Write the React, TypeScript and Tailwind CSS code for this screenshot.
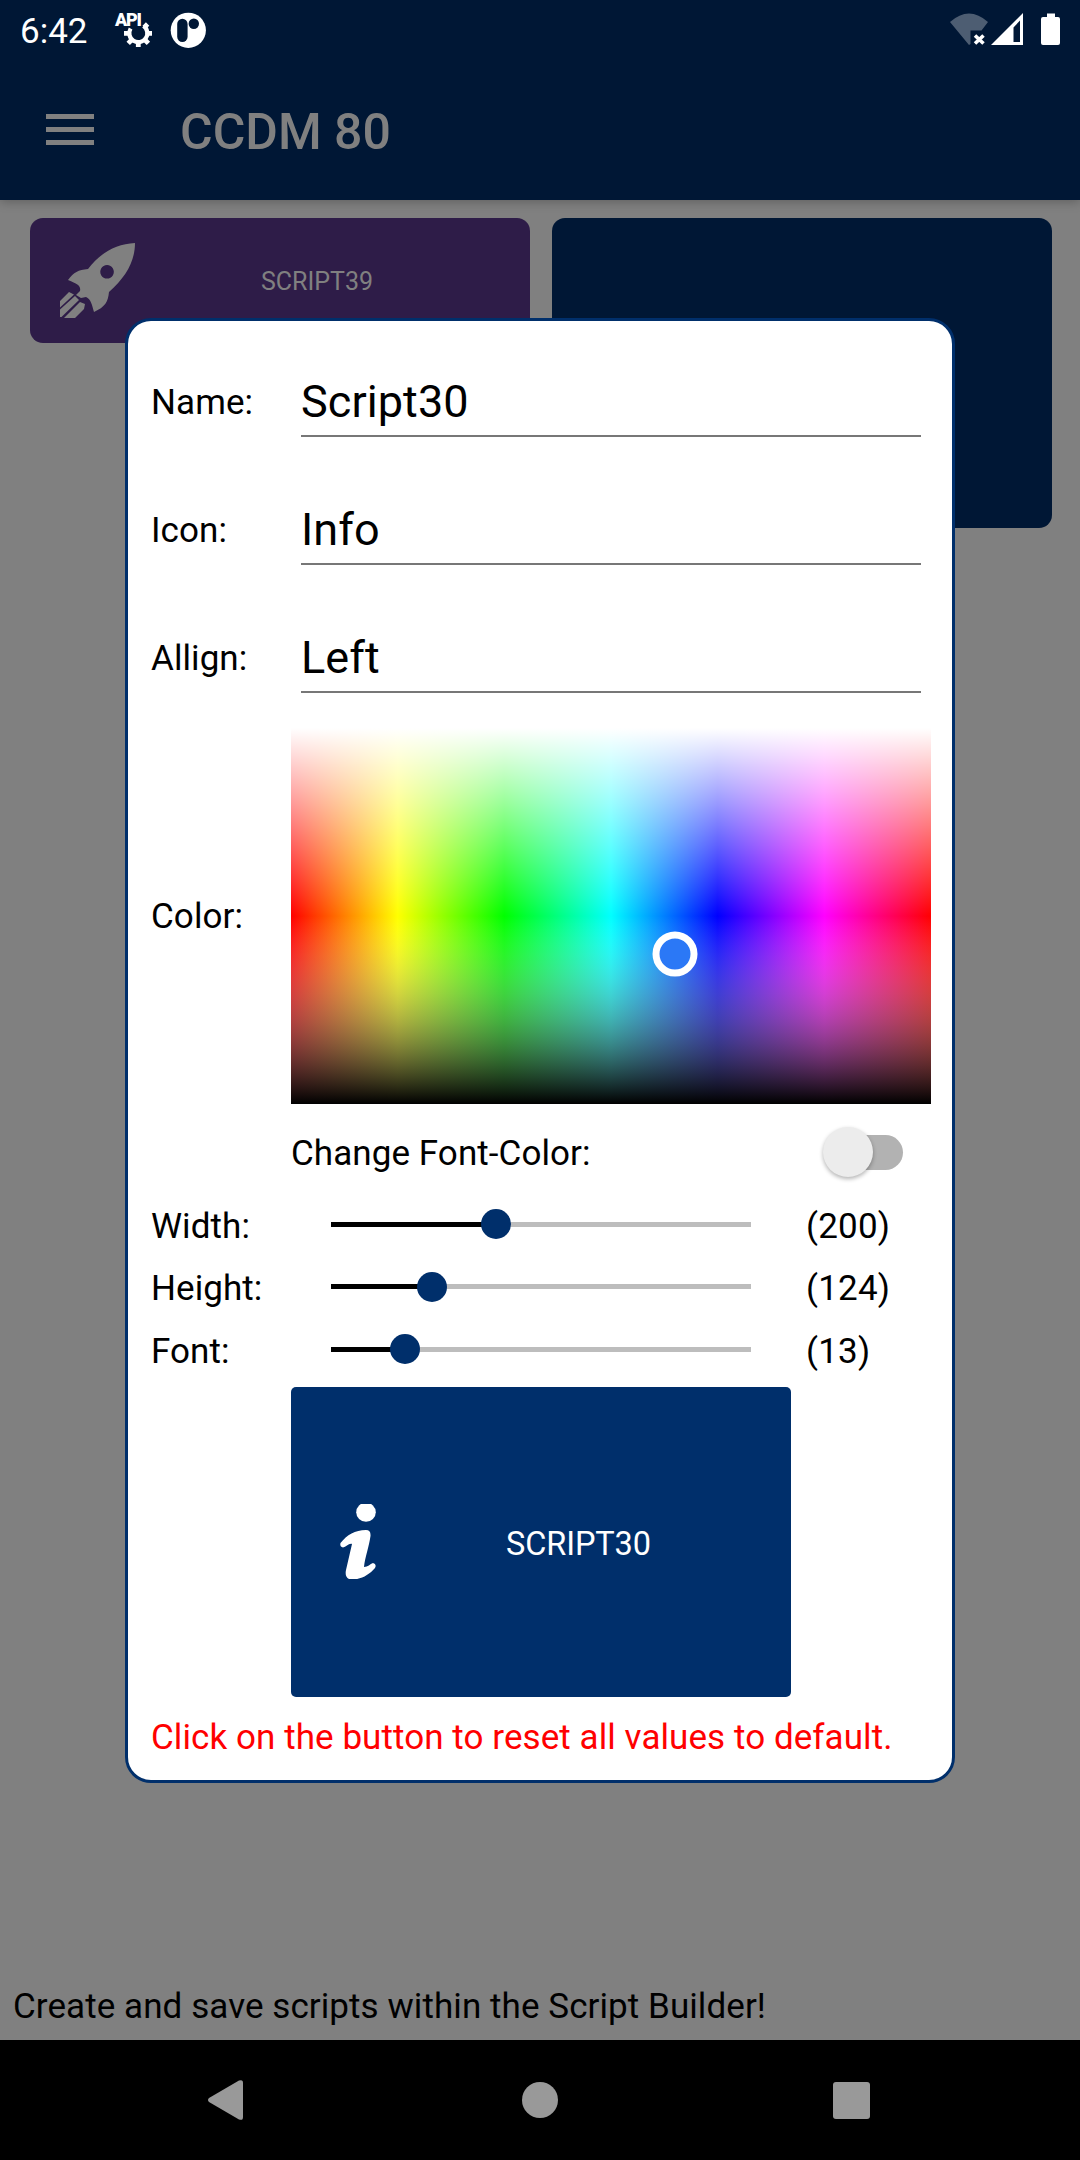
import React from "react";

const scripts = { name: "Script30", icon: "Info", align: "Left" };

const fields = [
  { label: "Name:", value: scripts.name },
  { label: "Icon:", value: scripts.icon },
  { label: "Allign:", value: scripts.align },
];

const sliders = [
  { label: "Width:", value: 200, offset: 165, row: "h-[62px]" },
  { label: "Height:", value: 124, offset: 101, row: "h-[63px]" },
  { label: "Font:", value: 13, offset: 74, row: "h-[62px]" },
];

function ApiGearIcon() {
  return (
    <div className="relative h-[36px] w-[40px]">
      <svg className="h-[36px] w-[40px]" viewBox="0 0 40 36">
        <g fill="none" stroke="#fff">
          <path d="M16.6 16.5 A9 9 0 1 0 29.5 13.8" strokeWidth="4.2" />
          <path d="M15 21.3 H10 M33 21.3 H38 M24.3 30 V35 M17.8 27.8 L14.2 31.4 M30.8 27.8 L34.4 31.4 M30.2 15.4 L33.6 12" strokeWidth="4.8" />
        </g>
      </svg>
      <span className="absolute left-[1px] top-[-3px] text-[18px] font-black leading-[21px] tracking-[-1.3px]">API</span>
    </div>
  );
}

function RoundLogoIcon() {
  return (
    <svg className="h-[36px] w-[36px]" viewBox="0 0 36 36">
      <circle cx="18.3" cy="18.3" r="17.6" fill="#fff" />
      <rect x="7.2" y="6.7" width="10.4" height="23.3" rx="5.2" fill="#001735" />
      <circle cx="23.8" cy="11.8" r="5.2" fill="#001735" />
    </svg>
  );
}

function StatusBar() {
  return (
    <div className="flex h-[60px] items-center pl-5 pr-5 text-white">
      <span className="w-[94px] pt-[2px] text-[35px] leading-[41px]">6:42</span>
      <ApiGearIcon />
      <div className="w-4" />
      <RoundLogoIcon />
      <div className="flex-1" />
      <svg className="-mt-[2px] h-[33px] w-[110px]" viewBox="0 0 110 33">
        <path d="M0 9 Q19 -8 38 9 L31.5 17.5 H20.5 V31 L19 32 Z" fill="#4d5d72" />
        <path d="M25 22.5 L33.5 30.5 M33.5 22.5 L25 30.5" stroke="#fff" strokeWidth="3.6" />
        <path fillRule="evenodd" d="M73 0 V32 H41 Z M70 7.5 L63.5 14.5 V29 H70 Z" fill="#fff" />
        <path d="M97 0.5 h8 v3.5 h3 q2 0 2 2 v24 q0 2 -2 2 h-15 q-2 0 -2 -2 v-24 q0 -2 2 -2 h4 z" fill="#fff" />
      </svg>
    </div>
  );
}

function AppBar() {
  return (
    <div className="flex h-[140px] items-center pl-[46px]">
      <div className="-mt-[1px] flex w-12 flex-col gap-2">
        <div className="h-[5px] bg-[#808080]" />
        <div className="h-[5px] bg-[#808080]" />
        <div className="h-[5px] bg-[#808080]" />
      </div>
      <span className="ml-[86px] mt-1 text-[50px] font-medium leading-[58px] text-[#808080]">CCDM 80</span>
    </div>
  );
}

function RocketIcon() {
  return (
    <svg className="h-[75px] w-[75px]" viewBox="0 0 75 75" fill="#808080">
      <path fillRule="evenodd" d="M75 0 C75 18 66 34 49 49 C48 59 45 64 34 69 C32 62 31 56 26 54 L21 55 L16 52 L20 48 C21 43 18 41 8 37 C14 29 18 27 28 26 C40 10 56 1 75 0 Z M47 22 a6.8 6.8 0 1 0 0.1 0 Z" />
      <path d="M0 58 L9 49 L14 51.5 L0 64.5 Z M0 66.5 L15 53 L19 57 L1.5 74 L0 74 Z M4 75 L20 59 L25 61 L24 66 L15 75 Z" />
    </svg>
  );
}

function InfoIcon() {
  return (
    <svg className="-mt-[2px] h-[75px] w-[36px]" viewBox="0 0 36 75" fill="#fff">
      <ellipse cx="26" cy="8.2" rx="9.8" ry="9.6" />
      <path d="M0.5 39 C7 31 15 26 26 26 Q31 26 30.5 32 C29 43 25 53 24 63 C28 63 30 60 33 59 Q37 60 35 64 C29 71 21 75.5 12 75.5 C6 75.5 5 71 6 66 L12 40 C9 39 6 43 3 43.5 Q-0.5 43 0.5 39 Z" />
    </svg>
  );
}

function ColorField() {
  return (
    <svg className="block h-[376px] w-[640px]" viewBox="0 0 640 376">
      <defs>
        <linearGradient id="hue">
          <stop offset="0" stopColor="#f00" />
          <stop offset="0.16667" stopColor="#ff0" />
          <stop offset="0.33333" stopColor="#0f0" />
          <stop offset="0.5" stopColor="#0ff" />
          <stop offset="0.66667" stopColor="#00f" />
          <stop offset="0.83333" stopColor="#f0f" />
          <stop offset="1" stopColor="#f00" />
        </linearGradient>
        <linearGradient id="shade" x1="0" y1="0" x2="0" y2="1">
          <stop offset="0" stopColor="#fff" />
          <stop offset="0.5" stopColor="#fff" stopOpacity="0" />
          <stop offset="1" stopColor="#000" />
        </linearGradient>
      </defs>
      <rect width="640" height="376" fill="url(#hue)" />
      <rect width="640" height="376" fill="url(#shade)" />
      <circle cx="384" cy="226" r="19" fill="#2b78f6" stroke="#fff" strokeWidth="7" />
    </svg>
  );
}

function Dialog() {
  return (
    <div className="absolute left-[125px] top-[318px] flex h-[1465px] w-[830px] flex-col rounded-[26px] border-[3px] border-[#002f6b] bg-white pl-[23px] text-[35px] leading-[41px] tracking-[0.07px] text-black">
      <div className="h-[23px]" />
      {fields.map((f) => (
        <div key={f.label} className="flex h-32 items-start">
          <span className="w-[150px] pt-[38px]">{f.label}</span>
          <div className="h-[93px] w-[620px] border-b-[2.5px] border-[#777] pt-[31px] text-[45px] leading-[53px]">{f.value}</div>
        </div>
      ))}
      <div className="flex h-[376px] items-center">
        <span className="w-[140px] pt-[1px]">Color:</span>
        <ColorField />
      </div>
      <div className="flex h-[89px] items-center pl-[140px] pt-2">
        <span className="w-[531px] pt-[2px]">Change Font-Color:</span>
        <div className="relative ml-[6px] h-[35px] w-[75px] rounded-full bg-[#b2b2b2]">
          <div className="absolute -left-[5px] -top-[8px] h-[50px] w-[50px] rounded-full bg-[#ececec] shadow-[0_2px_4px_rgba(0,0,0,0.3)]" />
        </div>
      </div>
      {sliders.map((s) => (
        <div key={s.label} className={"flex items-center " + s.row}>
          <span className="w-[180px] pt-[4px]">{s.label}</span>
          <div className="relative h-[5px] w-[420px] bg-[#bdbdbd]">
            <div className="h-full bg-black" style={{ width: s.offset }} />
            <div className="absolute -top-[12.5px] h-[30px] w-[30px] rounded-full bg-[#002f6b]" style={{ left: s.offset - 15 }} />
          </div>
          <span className="ml-[55px] pt-[4px] tracking-[0.2px]">({s.value})</span>
        </div>
      ))}
      <button className="ml-[140px] mt-[7px] flex h-[310px] w-[500px] items-center rounded-[5px] bg-[#002f6b] pl-[49px] text-white">
        <InfoIcon />
        <span className="ml-[130px] pt-[3px] text-[32.5px] leading-[38px] tracking-[-0.1px]">SCRIPT30</span>
      </button>
      <span className="mt-5 text-[#f00]">Click on the button to reset all values to default.</span>
    </div>
  );
}

export default function App() {
  return (
    <div className="relative flex h-[2160px] w-[1080px] flex-col overflow-hidden bg-[#808080] font-['Roboto',sans-serif]">
      <header className="bg-[#001735] shadow-[0_2px_10px_rgba(0,0,0,0.25)]">
        <StatusBar />
        <AppBar />
      </header>
      <main className="flex flex-1 flex-col justify-between">
        <div className="flex items-start gap-[22px] pl-[30px] pt-[18px]">
          <div className="flex h-[125px] w-[500px] items-center rounded-[13px] bg-[#2e1c48] pl-[30px] text-[#808080]">
            <RocketIcon />
            <span className="ml-[126px] pt-[2px] text-[25px] leading-[29px]">SCRIPT39</span>
          </div>
          <div className="h-[310px] w-[500px] rounded-[13px] bg-[#001735]" />
        </div>
        <p className="pb-[13px] pl-[13px] text-[35px] leading-[41px] tracking-[0.07px] text-black">Create and save scripts within the Script Builder!</p>
      </main>
      <nav className="flex h-[120px] items-center bg-black">
        <svg className="ml-[208px] h-10 w-[35px]" viewBox="0 0 35 40">
          <path d="M1 18 L31 0.6 Q35 -1 35 3 V37 Q35 41 31 39.4 L1 22 Q-1 20 1 18 Z" fill="#999" />
        </svg>
        <div className="ml-[279px] h-9 w-9 rounded-full bg-[#999]" />
        <div className="ml-[275px] h-[37px] w-[37px] rounded-[3px] bg-[#999]" />
      </nav>
      <Dialog />
    </div>
  );
}
